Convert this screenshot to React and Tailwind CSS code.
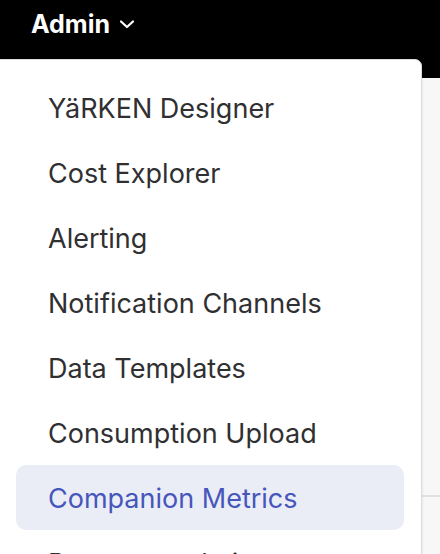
import React from "react";

const items = [
  "YäRKEN Designer",
  "Cost Explorer",
  "Alerting",
  "Notification Channels",
  "Data Templates",
  "Consumption Upload",
  "Companion Metrics",
  "Recommendations",
];

const App = () => {
  return (
    <div className="relative w-[440px] h-[554px] overflow-hidden bg-black font-['Inter',sans-serif]">
      <header className="h-[78px] flex items-start pt-[8px] pl-[31px]">
        <button className="flex items-center gap-[9px] text-white text-[25px] font-bold leading-[32px]">
          Admin
          <svg width="16" height="16" viewBox="0 0 16 16" fill="none" stroke="currentColor" strokeWidth="2.2" strokeLinecap="round" strokeLinejoin="round">
            <path d="M2 5.5l6 5.5 6-5.5" />
          </svg>
        </button>
      </header>
      <div className="h-[476px] bg-[#f7f7f8] flex flex-col">
        <div className="h-[417px]"></div>
        <div className="h-[2px] bg-[#e2e2e4]"></div>
      </div>

      <div className="absolute left-[-8px] top-[59px] w-[430px] h-[520px] bg-white border border-[#dcdce0] rounded-[7px] shadow-sm pt-[15px] pl-[23px] pr-[17px]">
        <ul className="flex flex-col">
          {items.map((item) => (
            <li
              key={item}
              className={
                item === "Companion Metrics"
                  ? "h-[65px] flex items-center pt-[4px] pl-[32px] rounded-[10px] bg-[#eaedf6] text-[#4656bb] text-[27px]"
                  : "h-[65px] flex items-center pt-[4px] pl-[32px] text-[#303032] text-[27px]"
              }
            >
              {item}
            </li>
          ))}
        </ul>
      </div>
    </div>
  );
};

export default App;
